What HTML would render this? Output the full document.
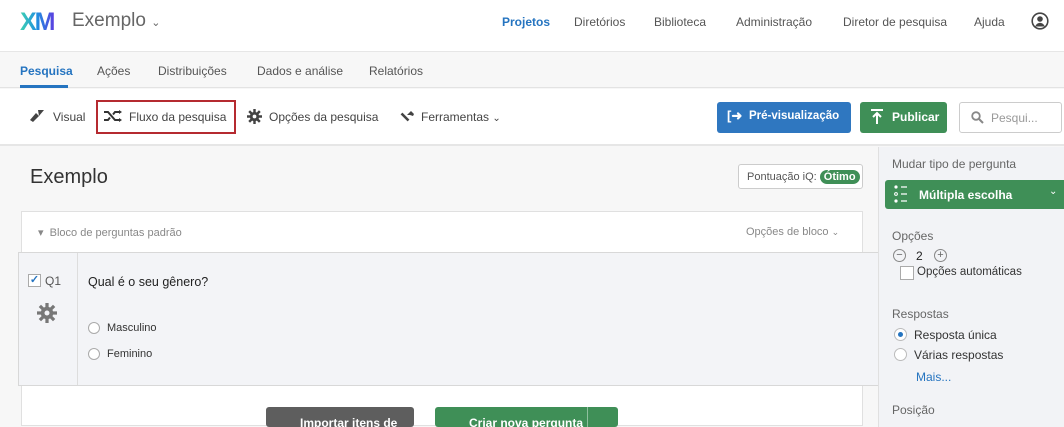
<!DOCTYPE html>
<html><head><meta charset="utf-8"><style>
*{box-sizing:border-box;margin:0;padding:0}
body{width:1064px;height:422px;overflow:hidden;font-family:"Liberation Sans",sans-serif;font-size:12px;color:#333;background:#f7f7f7;position:relative}
.a{position:absolute;white-space:nowrap}
.g{color:#555}
</style></head><body>
<div class="a" style="left:0;top:0;width:1064px;height:52px;background:#fff;border-bottom:1px solid #e6e6e6"></div>
<div class="a" style="left:20px;top:7px;font-size:25px;font-weight:bold;letter-spacing:-2px;background:linear-gradient(90deg,#3fd3b0,#1f8fe0 50%,#5b3fe0);-webkit-background-clip:text;color:transparent;line-height:30px">XM</div>
<div class="a" style="left:72px;top:10px;font-size:19px;color:#666">Exemplo <span style="font-size:11px">⌄</span></div>
<div class="a" style="left:502px;top:15px;color:#2574c0;font-weight:bold;font-size:12px">Projetos</div>
<div class="a g" style="left:574px;top:15px">Diretórios</div>
<div class="a g" style="left:654px;top:15px">Biblioteca</div>
<div class="a g" style="left:736px;top:15px">Administração</div>
<div class="a g" style="left:843px;top:15px">Diretor de pesquisa</div>
<div class="a g" style="left:974px;top:15px">Ajuda</div>
<svg class="a" style="left:1031px;top:12px" width="18" height="18" viewBox="0 0 18 18"><circle cx="9" cy="9" r="7.8" fill="none" stroke="#444" stroke-width="1.6"/><circle cx="9" cy="7" r="2.8" fill="#444"/><path d="M4.2 14.5c1-2.6 2.7-3.6 4.8-3.6s3.8 1 4.8 3.6" fill="#444"/></svg>
<div class="a" style="left:0;top:53px;width:1064px;height:35px;background:#f7f7f7;border-bottom:1px solid #e3e3e3"></div>
<div class="a" style="left:20px;top:64px;color:#2574c0;font-weight:bold">Pesquisa</div>
<div class="a" style="left:20px;top:85px;width:48px;height:3px;background:#2574c0"></div>
<div class="a g" style="left:97px;top:64px">Ações</div>
<div class="a g" style="left:158px;top:64px">Distribuições</div>
<div class="a g" style="left:257px;top:64px">Dados e análise</div>
<div class="a g" style="left:369px;top:64px">Relatórios</div>
<div class="a" style="left:0;top:89px;width:1064px;height:57px;background:#fff;border-bottom:2px solid #e6e6e6"></div>
<svg class="a" style="left:29px;top:109px" width="16" height="14" viewBox="0 0 16 14"><path d="M9 1l6 0-5 6z" fill="#444"/><path d="M1 11l6-7 3 3-6 6z" fill="#444"/></svg>
<div class="a" style="left:53px;top:110px;color:#444">Visual</div>
<div class="a" style="left:96px;top:100px;width:140px;height:34px;border:2px solid #b52a30"></div>
<svg class="a" style="left:103px;top:110px" width="20" height="12" viewBox="0 0 20 12"><path d="M1 2h4l7 8h5M1 10h4l2-2.5M10 4.5l2-2.5h5" stroke="#333" stroke-width="2" fill="none"/><path d="M16 0l3 2-3 2zM16 8l3 2-3 2z" fill="#333"/></svg>
<div class="a" style="left:129px;top:110px;color:#444">Fluxo da pesquisa</div>
<svg class="a" style="left:247px;top:109px" width="15" height="15" viewBox="0 0 16 16"><g stroke="#444" stroke-width="2.6"><path d="M8 0v16M0 8h16M2.3 2.3l11.4 11.4M13.7 2.3L2.3 13.7"/></g><circle cx="8" cy="8" r="5" fill="#444"/><circle cx="8" cy="8" r="2" fill="#fff"/></svg>
<div class="a" style="left:269px;top:110px;color:#444">Opções da pesquisa</div>
<svg class="a" style="left:400px;top:109px" width="15" height="15" viewBox="0 0 15 15"><path d="M1.5 4.5l7 7" stroke="#444" stroke-width="2.6"/><path d="M7 6l4-4 3 3-1 2-3-1z" fill="#444"/></svg>
<div class="a" style="left:421px;top:110px;color:#444">Ferramentas <span style="font-size:10px">⌄</span></div>
<div class="a" style="left:717px;top:102px;width:134px;height:31px;background:#2f77c0;border-radius:3px;color:#fff;font-weight:bold;font-size:11.5px;padding:8px 0 0 32px">Pré-visualização</div>
<div class="a" style="left:727px;top:108px;color:#fff;font-weight:bold;font-size:13px">[➜</div>
<div class="a" style="left:860px;top:102px;width:87px;height:31px;background:#3f8f57;border-radius:3px;color:#fff;font-weight:bold;padding:8px 0 0 32px">Publicar</div>
<svg class="a" style="left:871px;top:109px" width="12" height="16" viewBox="0 0 12 16"><path d="M0 1h12M6 15V4M2 8l4-4 4 4" stroke="#fff" stroke-width="2" fill="none"/></svg>
<div class="a" style="left:959px;top:102px;width:103px;height:31px;border:1px solid #ccc;border-radius:3px;background:#fff;color:#999;padding:8px 0 0 31px">Pesqui...</div>
<svg class="a" style="left:971px;top:111px" width="13" height="13" viewBox="0 0 13 13"><circle cx="5" cy="5" r="3.8" stroke="#888" stroke-width="1.8" fill="none"/><path d="M8 8l4 4" stroke="#888" stroke-width="2"/></svg>
<div class="a" style="left:30px;top:166px;font-size:20px;color:#333">Exemplo</div>
<div class="a" style="left:738px;top:164px;width:125px;height:25px;border:1px solid #ccc;border-radius:3px;background:#fff;font-size:11px;color:#555;padding:6px 0 0 8px">Pontuação iQ: <span style="background:#3f8f57;color:#fff;border-radius:8px;padding:1px 4px;font-weight:bold">Ótimo</span></div>
<div class="a" style="left:21px;top:211px;width:842px;height:215px;background:#fff;border:1px solid #e0e0e0"></div>
<div class="a" style="left:38px;top:226px;font-size:11px;color:#888">▾ &nbsp;Bloco de perguntas padrão</div>
<div class="a" style="left:746px;top:226px;font-size:11px;color:#888">Opções de bloco <span style="font-size:9px">⌄</span></div>
<div class="a" style="left:18px;top:252px;width:862px;height:134px;background:#f3f4f7;border:1px solid #d8d8d8"></div>
<div class="a" style="left:77px;top:253px;width:1px;height:132px;background:#ddd"></div>
<div class="a" style="left:28px;top:274px;width:13px;height:13px;border:1px solid #aaa;background:#fff;color:#2574c0;font-size:11px;line-height:11px;text-align:center;font-weight:bold">✓</div>
<div class="a" style="left:45px;top:274px;color:#555;font-size:12px">Q1</div>
<svg class="a" style="left:37px;top:303px" width="20" height="20" viewBox="0 0 16 16"><g stroke="#777" stroke-width="2.6"><path d="M8 0v16M0 8h16M2.3 2.3l11.4 11.4M13.7 2.3L2.3 13.7"/></g><circle cx="8" cy="8" r="5" fill="#777"/><circle cx="8" cy="8" r="2" fill="#f3f4f7"/></svg>
<div class="a" style="left:88px;top:275px;color:#222;font-size:12.5px">Qual é o seu gênero?</div>
<div class="a" style="left:88px;top:322px;width:12px;height:12px;border:1px solid #aaa;border-radius:50%;background:#fff"></div>
<div class="a" style="left:107px;top:322px;color:#333;font-size:11px">Masculino</div>
<div class="a" style="left:88px;top:348px;width:12px;height:12px;border:1px solid #aaa;border-radius:50%;background:#fff"></div>
<div class="a" style="left:107px;top:348px;color:#333;font-size:11px">Feminino</div>
<div class="a" style="left:266px;top:407px;width:148px;height:20px;background:#5e5e5e;border-radius:3px;color:#fff;font-weight:bold;padding:9px 0 0 34px;overflow:hidden">Importar itens de</div>
<div class="a" style="left:435px;top:407px;width:183px;height:20px;background:#3f8f57;border-radius:3px;color:#fff;font-weight:bold;padding:9px 0 0 34px;overflow:hidden">Criar nova pergunta</div>
<div class="a" style="left:587px;top:407px;width:1px;height:20px;background:#8fc09e"></div>
<div class="a" style="left:878px;top:147px;width:186px;height:280px;background:#f2f3f6;border-left:1px solid #e0e0e0"></div>
<div class="a" style="left:892px;top:157px;color:#666;font-size:12px">Mudar tipo de pergunta</div>
<div class="a" style="left:885px;top:180px;width:179px;height:29px;background:#3f8f57;border-radius:3px 0 0 3px;color:#fff;font-weight:bold;padding:8px 0 0 34px">Múltipla escolha</div>
<div class="a" style="left:1049px;top:186px;color:#fff;font-size:10px">⌄</div>
<svg class="a" style="left:893px;top:184px" width="20" height="20" viewBox="0 0 20 20"><circle cx="3" cy="3" r="1.6" fill="#fff"/><circle cx="3" cy="10" r="1.4" fill="none" stroke="#fff"/><circle cx="3" cy="17" r="1.6" fill="#fff"/><path d="M8 3h6M8 10h6M8 17h6" stroke="#fff" stroke-width="1.2"/></svg>
<div class="a" style="left:892px;top:229px;color:#666;font-size:12px">Opções</div>
<div class="a" style="left:893px;top:249px;width:13px;height:13px;border:1px solid #888;border-radius:50%;font-size:11px;line-height:10px;text-align:center;color:#666">−</div>
<div class="a" style="left:916px;top:249px;color:#222;font-size:12px">2</div>
<div class="a" style="left:934px;top:249px;width:13px;height:13px;border:1px solid #888;border-radius:50%;font-size:11px;line-height:11px;text-align:center;color:#666">+</div>
<div class="a" style="left:900px;top:266px;width:14px;height:14px;border:1px solid #aaa;background:#fff"></div>
<div class="a" style="left:917px;top:266px;color:#333;font-size:11.5px">Opções automáticas</div>
<div class="a" style="left:892px;top:307px;color:#666;font-size:12px">Respostas</div>
<div class="a" style="left:894px;top:328px;width:13px;height:13px;border:1px solid #bbb;border-radius:50%;background:#fff"></div>
<div class="a" style="left:898px;top:332px;width:5px;height:5px;border-radius:50%;background:#2574c0"></div>
<div class="a" style="left:914px;top:328px;color:#333;font-size:12px">Resposta única</div>
<div class="a" style="left:894px;top:348px;width:13px;height:13px;border:1px solid #bbb;border-radius:50%;background:#fff"></div>
<div class="a" style="left:914px;top:348px;color:#333;font-size:12px">Várias respostas</div>
<div class="a" style="left:916px;top:370px;color:#2574c0;font-size:12px">Mais...</div>
<div class="a" style="left:892px;top:403px;color:#666;font-size:12px">Posição</div>
</body></html>
